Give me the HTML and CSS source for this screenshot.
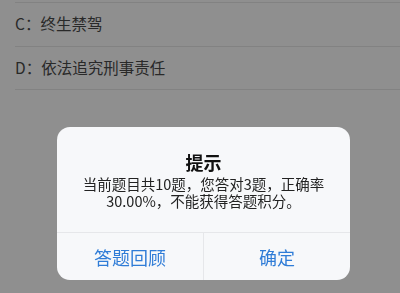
FILE: index.html
```html
<!DOCTYPE html>
<html lang="zh-CN">

<head>
    <meta charset="UTF-8">
    <meta name="viewport" content="width=device-width, initial-scale=1.0">
    <title>答题结果</title>
    <link rel="stylesheet" href="styles.css">
</head>

<body>
    <ul class="options">
        <li class="option">C：终生禁驾</li>
        <li class="option">D：依法追究刑事责任</li>
    </ul>

    <div class="mask"></div>

    <div class="dialog">
        <div class="dialog-body">
            <h3 class="dialog-title">提示</h3>
            <p class="dialog-msg">当前题目共10题，您答对3题，正确率<br>30.00%，不能获得答题积分。</p>
        </div>
        <div class="dialog-btns">
            <button class="btn">答题回顾</button>
            <button class="btn">确定</button>
        </div>
    </div>
</body>

</html>
```

FILE: styles.css
```css
* {
    margin: 0;
    padding: 0;
    box-sizing: border-box;
}

body {
    height: 100vh;
    background-color: #ffffff;
    font-family: "Noto Sans CJK SC", "Liberation Sans", sans-serif;
    overflow: hidden;
}

.options {
    list-style: none;
    padding-top: 2px;
}

.option {
    height: 44px;
    line-height: 41px;
    margin-left: 15px;
    border-top: 1px solid #e8e8e8;
    font-size: 15.5px;
    color: #4a4a4a;
}

.option:last-child {
    border-bottom: 1px solid #e8e8e8;
}

.mask {
    position: fixed;
    top: 0;
    left: 0;
    right: 0;
    bottom: 0;
    background-color: rgba(0, 0, 0, 0.44);
}

.dialog {
    position: fixed;
    top: 127px;
    left: 57px;
    width: 293px;
    height: 153px;
    background-color: #f7f8fa;
    border-radius: 13px;
    overflow: hidden;
    display: flex;
    flex-direction: column;
}

.dialog-body {
    height: 106px;
    padding-top: 22px;
    text-align: center;
    border-bottom: 1px solid #e6e7ea;
}

.dialog-title {
    font-size: 18px;
    line-height: 26px;
    font-weight: bold;
    color: #111111;
}

.dialog-msg {
    font-size: 14.5px;
    line-height: 17px;
    color: #222222;
}

.dialog-btns {
    flex: 1;
    display: flex;
}

.btn {
    flex: 1;
    border: none;
    outline: none;
    background: none;
    font-family: inherit;
    font-size: 18px;
    color: #2f7cd7;
    cursor: pointer;
}

.btn + .btn {
    border-left: 1px solid #e6e7ea;
}
```
